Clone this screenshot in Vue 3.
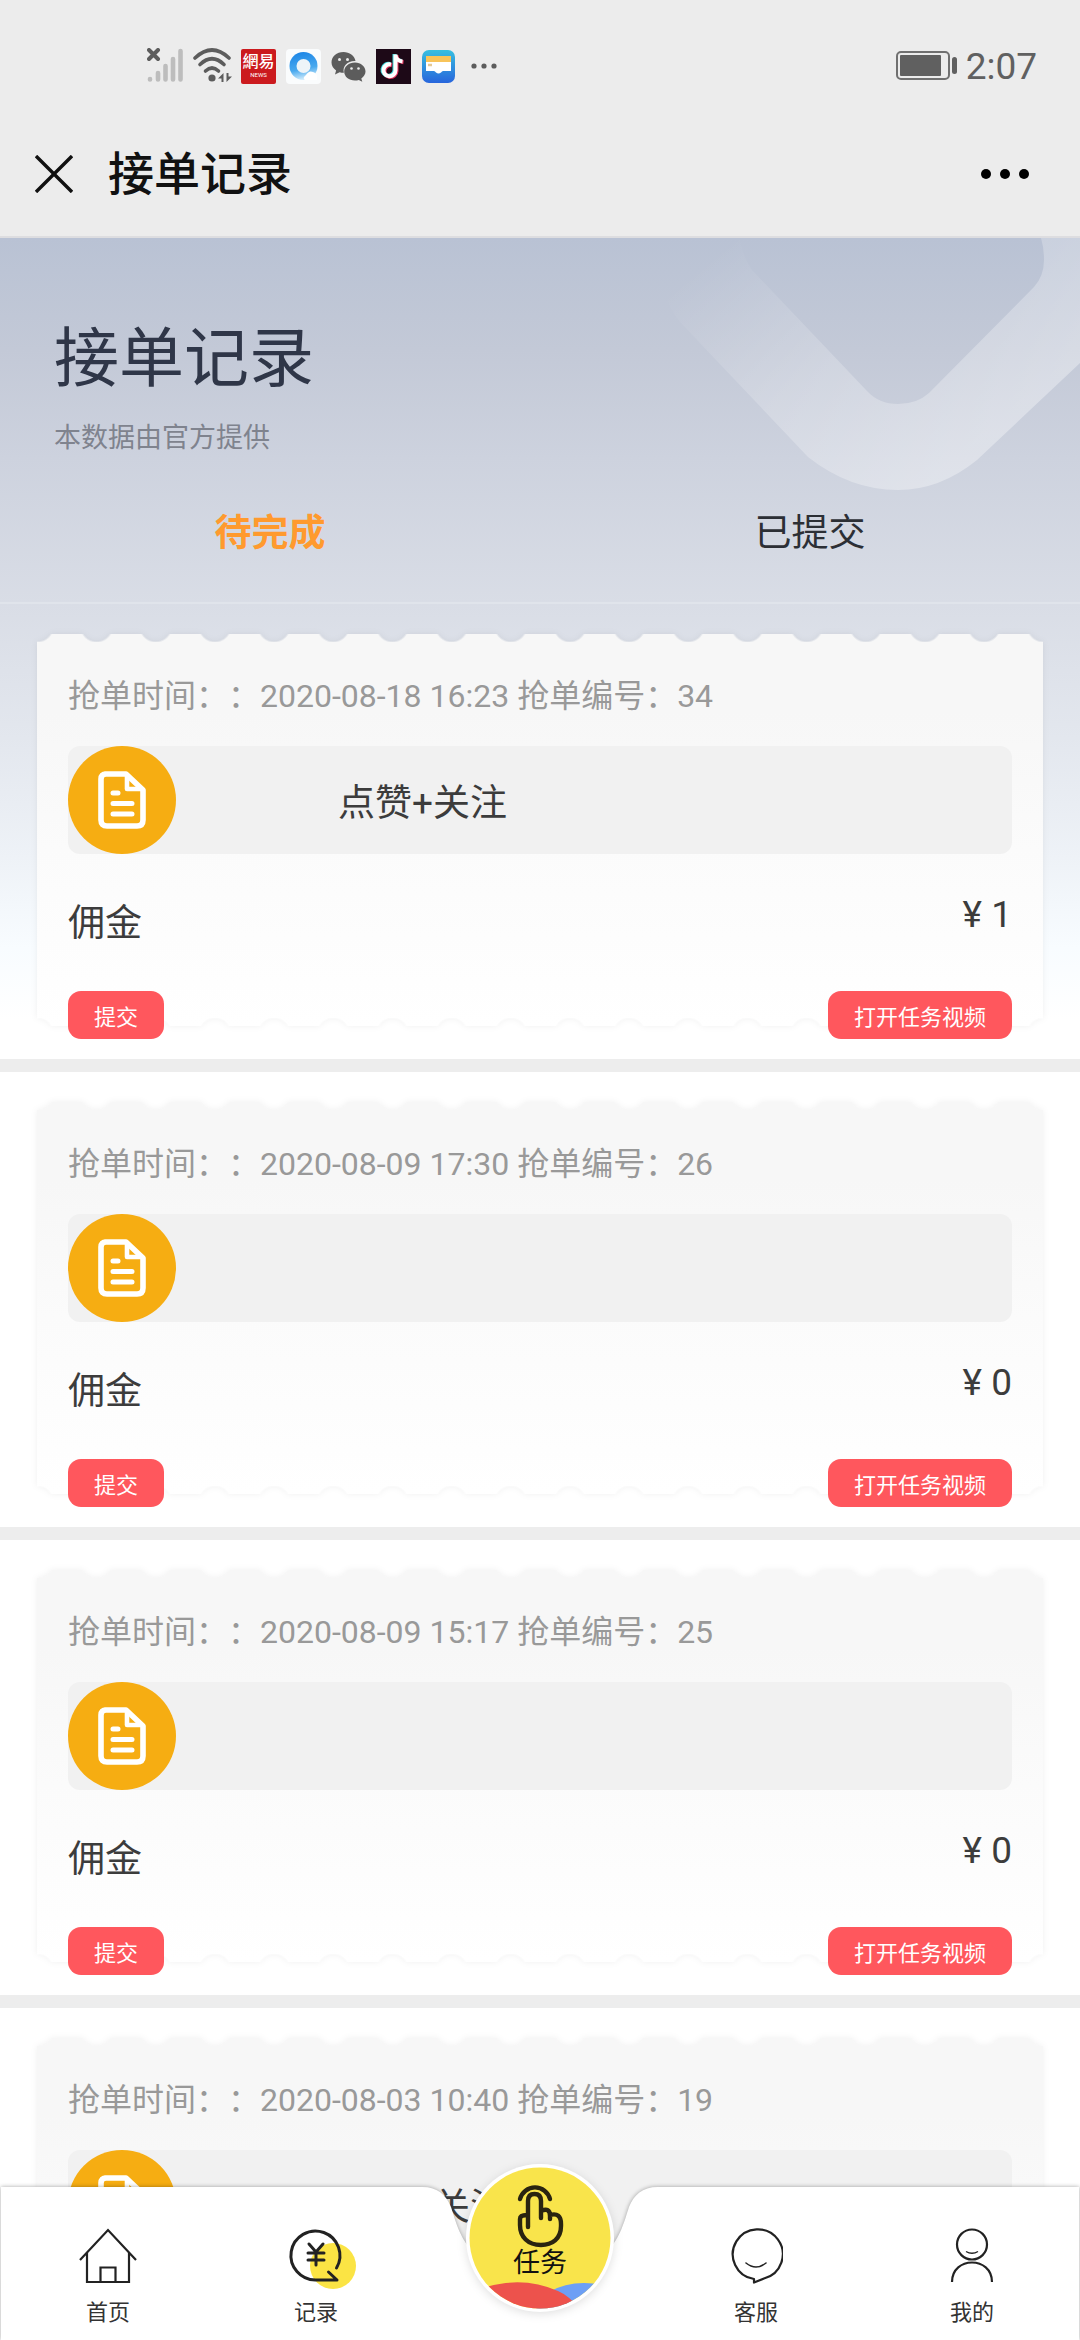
<script setup>
import { ref } from 'vue'

const activeTab = ref('pending')
const tabs = [
  { key: 'pending', label: '待完成' },
  { key: 'submitted', label: '已提交' },
]

const orders = [
  { id: 34, time: '2020-08-18 16:23', title: '点赞+关注', reward: 1 },
  { id: 26, time: '2020-08-09 17:30', title: '', reward: 0 },
  { id: 25, time: '2020-08-09 15:17', title: '', reward: 0 },
  { id: 19, time: '2020-08-03 10:40', title: '点赞+关注', reward: 0 },
]
</script>

<template>
  <div class="app">
    <header class="top">
      <div class="status">
        <div class="status-icons">
          <svg width="36" height="36" viewBox="0 0 36 36">
            <path d="M2 2 L11 11 M11 2 L2 11" stroke="#5c5c5c" stroke-width="4" stroke-linecap="round" />
            <g stroke="#bdbdbd" stroke-width="4.6" stroke-linecap="round">
              <path d="M3 31V31.5M11 25V31.5M18.500 18V31.500M26 11V31.500M33.500 3V31.500" />
            </g>
          </svg>
          <svg class="wifi" width="40" height="36" viewBox="0 0 40 36" fill="none">
            <g stroke="#5c5c5c" stroke-width="3.600" stroke-linecap="round">
              <path d="M2 10Q19 -6 36 10" />
              <path d="M7 16.500Q19 5 31 16.500" />
              <path d="M12.500 23Q19 17 25.500 23" />
            </g>
            <circle cx="19" cy="30" r="3.600" fill="#5c5c5c" />
            <path d="M25 30.500L30.500 25V34H28.500V30.500ZM39 28.500L33.500 34V25H35.500V28.500Z" fill="#5c5c5c" />
          </svg>
          <span class="news"><b>網易</b><i>NEWS</i></span>
          <svg width="35" height="36" viewBox="0 0 35 36">
            <defs>
              <linearGradient id="browser" x1="0.400" y1="0" x2="0.600" y2="1">
                <stop offset="0" stop-color="#1c86e6" />
                <stop offset="0.600" stop-color="#49a9ee" />
                <stop offset="1" stop-color="#dff3fd" />
              </linearGradient>
            </defs>
            <rect width="35" height="35" y="1" rx="4" fill="#fafcfd" />
            <circle cx="17.500" cy="18" r="14" fill="url(#browser)" />
            <circle cx="17.500" cy="18" r="7" fill="#eef4f8" />
            <path d="M20 27Q23 22 27 24Q32 25 31 32H19Q16 30 20 27Z" fill="#fff" />
          </svg>
          <svg width="35" height="36" viewBox="0 0 35 36" fill="#5c5c5c">
            <path d="M12.500 4C5.600 4 0.500 8.500 0.500 14.300c0 3.500 1.800 6.200 4.600 8.200L4 26.500l4.600-2.300c1.500.4 2.600.6 4.300.6C11 18 17 12.500 24.500 13 23.500 7.500 18.500 4 12.500 4Z" />
            <path d="M24 14.500c-6.300 0-10.800 4-10.800 9 0 5.200 4.700 9 10.800 9 1.300 0 2.600-.3 3.800-.6l3.500 1.900-1-3.300c2.500-1.800 4.200-4.200 4.200-7 0-5-4.700-9-10.500-9Z" />
            <g fill="#ececec"><circle cx="8.500" cy="11.500" r="1.500" /><circle cx="16.500" cy="11.500" r="1.500" /><circle cx="20.500" cy="20.500" r="1.300" /><circle cx="27.500" cy="20.500" r="1.300" /></g>
          </svg>
          <svg width="35" height="36" viewBox="0 0 35 36" fill="none">
            <rect y="1" width="35" height="35" fill="#1d0917" />
            <g stroke-width="4">
              <path d="M15 16.500a6 6 0 1 0 4.500 6V6.500c0 4 3 6.500 7 7" stroke="#42d9dc" transform="translate(-1 -0.500)" />
              <path d="M15 16.500a6 6 0 1 0 4.500 6V6.500c0 4 3 6.500 7 7" stroke="#e5355f" transform="translate(1 0.700)" />
              <path d="M15 16.500a6 6 0 1 0 4.500 6V6.500c0 4 3 6.500 7 7" stroke="#fff" />
            </g>
          </svg>
          <svg width="35" height="36" viewBox="0 0 35 36">
            <defs>
              <linearGradient id="wallet" x1="0" y1="0" x2="0" y2="1">
                <stop offset="0" stop-color="#37bfe0" /><stop offset="1" stop-color="#2765dc" />
              </linearGradient>
            </defs>
            <rect x="1" y="2" width="33" height="33" rx="7" fill="url(#wallet)" />
            <path d="M5 8h25v8H5z" fill="#f8c45a" />
            <path d="M5 14h25v9h-8q-1 0-2 1.500-2.500 2-5 0Q14 23 13 23H5z" fill="#fff" />
            <path d="M7 17h4" stroke="#e5c896" stroke-width="2.500" />
          </svg>
          <svg width="35" height="36" viewBox="0 0 35 36" fill="#5c5c5c">
            <circle cx="8" cy="18" r="2.600" /><circle cx="18" cy="18" r="2.600" /><circle cx="28" cy="18" r="2.600" />
          </svg>
        </div>
        <div class="status-right">
          <svg width="62" height="30" viewBox="0 0 62 30">
            <rect x="1" y="1" width="52" height="27" rx="4" fill="none" stroke="#707070" stroke-width="2" />
            <rect x="4" y="4" width="41" height="21" rx="1" fill="#606060" />
            <rect x="56" y="6" width="5" height="17" rx="2.500" fill="#606060" />
          </svg>
          <time>2:07</time>
        </div>
      </div>
      <div class="titlebar">
        <button class="icon-btn" aria-label="关闭">
          <svg width="38" height="38" viewBox="0 0 38 38"><path d="M1 1L37 37M37 1L1 37" stroke="#111" stroke-width="3.400" /></svg>
        </button>
        <span class="bar-title">接单记录</span>
        <button class="icon-btn" aria-label="更多">
          <svg width="50" height="12" viewBox="0 0 50 12"><circle cx="6" cy="6" r="5" /><circle cx="25" cy="6" r="5" /><circle cx="44" cy="6" r="5" /></svg>
        </button>
      </div>
    </header>

    <main class="content">
      <section class="hero">
        <svg class="hero-mark" width="420" height="252" viewBox="0 0 420 252">
          <defs>
            <linearGradient id="mark" gradientUnits="userSpaceOnUse" x1="60" y1="10" x2="260" y2="250">
              <stop offset="0" stop-color="#fff" stop-opacity="0" />
              <stop offset="0.500" stop-color="#fff" stop-opacity="0.200" />
              <stop offset="1" stop-color="#fff" stop-opacity="0.340" />
            </linearGradient>
          </defs>
          <path d="M80 0Q82 18 92 32L207 153Q219 166 238 166Q257 166 269 155L374 49Q384 38 384 22Q384 10 381 0H420V125L317 222Q280 252 238 252Q190 252 148 219L20 84Q0 60 0 20V0Z" fill="url(#mark)" />
        </svg>
        <h1>接单记录</h1>
        <p>本数据由官方提供</p>
        <nav class="tabs">
          <button
            v-for="tab in tabs"
            :key="tab.key"
            :class="{ active: tab.key === activeTab }"
            @click="activeTab = tab.key"
          >{{ tab.label }}</button>
        </nav>
      </section>

      <ul class="orders">
        <li v-for="order in orders" :key="order.id" class="order">
          <article class="ticket">
            <div class="ticket-shadow"><div class="ticket-paper"></div></div>
            <div class="meta">抢单时间：：{{ order.time }} 抢单编号：{{ order.id }}</div>
            <div class="task">
              <span class="task-icon">
                <svg width="48" height="58" viewBox="0 0 48 58" fill="none" stroke="#fff" stroke-linejoin="round" stroke-linecap="round">
                  <path d="M7 3H28L45 19V49Q45 55 39 55H9Q3 55 3 49V8Q3 3 8 3Z" stroke-width="5.600" />
                  <path d="M29 4V18H44" stroke-width="4.600" />
                  <path d="M15 22H20M15 32.500H34M15 43H34" stroke-width="5" />
                </svg>
              </span>
              <span class="task-title">{{ order.title }}</span>
            </div>
            <div class="reward">
              <span class="reward-label">佣金</span>
              <span class="reward-value">¥ {{ order.reward }}</span>
            </div>
            <div class="actions">
              <button>提交</button>
              <button>打开任务视频</button>
            </div>
          </article>
        </li>
      </ul>
    </main>

    <nav class="tabbar">
      <div class="tabbar-bg">
        <div class="side"></div>
        <svg width="260" height="153" viewBox="0 0 260 153"><path d="M0 0H12C28 0 36 8 41 20C50 48 58 86 130 86C202 86 210 48 219 20C224 8 232 0 248 0H260V153H0Z" fill="#fff" /></svg>
        <div class="side"></div>
      </div>
      <a href="#home">
        <svg width="58" height="56" viewBox="0 0 58 56" fill="none" stroke="#222" stroke-width="2.200">
          <path d="M1 32L29 2L57 32M8 25V54H50V25M21.500 54V39.500H36.500V54" />
        </svg>
        <span>首页</span>
      </a>
      <a href="#records" class="records">
        <svg width="52" height="56" viewBox="0 0 52 56" fill="none" stroke="#222" stroke-width="3">
          <circle cx="43" cy="38" r="23" fill="#fbe444" stroke="none" />
          <path d="M46.500 40A24.500 24.500 0 1 0 26 52H47L38.500 44" stroke-linecap="round" stroke-linejoin="round" />
          <path d="M19 16L26 24L33 16M26 24V37M18 25H34M18 32H34" stroke-linecap="round" />
        </svg>
        <span>记录</span>
      </a>
      <a href="#tasks" class="center">
        <svg class="disc" width="148" height="148" viewBox="0 0 148 148">
          <defs><clipPath id="disc"><circle cx="74" cy="74" r="70.500" /></clipPath></defs>
          <circle cx="74" cy="74" r="74" fill="#fff" />
          <g clip-path="url(#disc)">
            <rect width="148" height="148" fill="#f9e44b" />
            <ellipse cx="118" cy="148" rx="48" ry="29" fill="#6d9ff5" />
            <path d="M0 130Q50 108 92 127Q104 132 116 148H0Z" fill="#ed524c" />
          </g>
          <g fill="none" stroke="#2a2410" stroke-width="4.400" stroke-linecap="round" stroke-linejoin="round">
            <path d="M54 35A15.500 15.500 0 0 1 84 35" />
            <path d="M62 63V37Q62 30 68.500 30Q75 30 75 37V54M75 47Q84 43 84 52V55M84 51Q95 48 95 60V62C95 75 86 81 75 81C62 81 54 73 54 61V55Q54 51 61 51" />
          </g>
        </svg>
        <span>任务</span>
      </a>
      <a href="#service">
        <svg width="54" height="56" viewBox="0 0 54 56" fill="none" stroke="#222" stroke-width="2.200" stroke-linejoin="round">
          <path d="M25 51A25 25 0 1 1 35 50.500L25 54.500Z" />
          <path d="M17 35Q27 43 37 35" stroke-width="1.600" stroke-linecap="round" />
        </svg>
        <span>客服</span>
      </a>
      <a href="#me">
        <svg width="44" height="56" viewBox="0 0 44 56" fill="none" stroke="#222" stroke-width="2.200">
          <circle cx="22" cy="16.500" r="15" />
          <path d="M2 54C2 28 42 28 42 54" />
          <path d="M16 23.500Q22 27 28 23.500" stroke-width="1.400" />
        </svg>
        <span>我的</span>
      </a>
    </nav>
  </div>
</template>

<style>
body {
  background: #fff;
}
</style>

<style scoped>
.app {
  position: relative;
  display: flex;
  flex-direction: column;
  height: 100vh;
  overflow: hidden;
  font-family: Roboto, "Noto Sans CJK SC", sans-serif;
  text-spacing-trim: space-all;
  color: #3c3c3c;
}

.app * {
  box-sizing: border-box;
}

button {
  border: 0;
  padding: 0;
  background: none;
  font: inherit;
  color: inherit;
  cursor: pointer;
}

svg {
  display: block;
  flex: none;
}

/* system and title bars */
.top {
  flex: none;
  background: #ececec;
  border-bottom: 2px solid #dddde0;
}

.status {
  display: flex;
  justify-content: space-between;
  align-items: center;
  height: 132px;
  padding: 0 43px 0 147px;
}

.status-icons {
  display: flex;
  align-items: center;
  gap: 10px;
}

.wifi {
  margin-right: -2px;
}

.news {
  display: flex;
  flex-direction: column;
  align-items: center;
  justify-content: center;
  width: 35px;
  height: 35px;
  border-radius: 2px;
  background: #cb1a1e;
  color: #fff;
}

.news b {
  font-size: 16px;
  line-height: 18px;
  font-weight: 500;
}

.news i {
  font-size: 6px;
  line-height: 8px;
  font-style: normal;
}

.status-right {
  display: flex;
  align-items: center;
  gap: 8px;
  font-size: 37px;
  color: #606060;
}

.titlebar {
  display: flex;
  align-items: center;
  height: 104px;
  padding: 0 50px 20px 35px;
}

.icon-btn {
  color: #000;
}

.bar-title {
  flex: 1;
  margin-left: 35px;
  font-size: 46px;
  font-weight: 500;
  line-height: 60px;
  color: #111;
}

/* scrolling page, running on behind the notch of the bottom bar */
.content {
  flex: 1;
  min-height: 0;
  margin-bottom: 66px;
  overflow-y: auto;
  scrollbar-width: none;
}

.content::before {
  content: "";
  display: block;
  height: 782px;
  margin-bottom: -782px;
  background: linear-gradient(#b9c2d4, #c3c9d7 112px, #cdd2de 220px, #d9dde6 366px, #e3e7ee 500px, #eef2f7 620px, #f8fcff 710px, #fff 782px);
}

.hero {
  position: relative;
  padding-top: 74px;
  border-bottom: 2px solid #e0e4eb;
}

.hero-mark {
  position: absolute;
  top: 0;
  right: 0;
}

h1 {
  margin: 0;
  padding-left: 54px;
  font-size: 65px;
  line-height: 94px;
  font-weight: 400;
  color: #2f3648;
}

p {
  margin: 0;
  padding: 12px 0 0 54px;
  font-size: 27px;
  line-height: 40px;
  color: #7f838e;
}

.tabs {
  position: relative;
  display: flex;
  height: 144px;
}

.tabs button {
  flex: 1;
  font-size: 37px;
  color: #2c2f35;
}

.tabs .active {
  font-weight: 700;
  color: #ff9a2e;
}

.orders {
  margin: 0;
  padding: 0 0 87px;
  list-style: none;
}

.order {
  padding: 30px 37px 20px;
  border-bottom: 13px solid #ededed;
}

.ticket {
  position: relative;
  padding: 38px 31px 0;
}

.ticket-shadow {
  position: absolute;
  inset: 0 0 13px;
  filter: drop-shadow(0 0 3px rgba(0, 0, 0, 0.06));
}

.ticket-paper {
  height: 100%;
  background: linear-gradient(#f7f7f7 20%, #fbfbfb 55%, #fff);
  mask-image:
    radial-gradient(circle at 50% -8px, transparent 15px, #000 17px),
    linear-gradient(#000, #000),
    radial-gradient(circle at 50% 16px, transparent 15px, #000 17px);
  mask-size: 59px 8px, 100% calc(100% - 16px), 59px 8px;
  mask-position: 30px 0, 0 8px, 30px 100%;
  mask-repeat: round no-repeat, no-repeat, round no-repeat;
}

.meta {
  position: relative;
  font-size: 32px;
  line-height: 48px;
  color: #999;
}

.task {
  position: relative;
  display: flex;
  align-items: center;
  height: 108px;
  margin-top: 26px;
  border-radius: 12px;
  background: #f1f1f1;
}

.task-icon {
  display: flex;
  align-items: center;
  justify-content: center;
  width: 108px;
  height: 108px;
  border-radius: 50%;
  background: #f6ad12;
}

.task-title {
  margin-left: 162px;
  font-size: 37px;
}

.reward {
  position: relative;
  display: flex;
  justify-content: space-between;
  height: 137px;
  padding-top: 32px;
  font-size: 37px;
}

.reward-label {
  line-height: 76px;
}

.reward-value {
  line-height: 58px;
}

.actions {
  position: relative;
  display: flex;
  justify-content: space-between;
}

.actions button {
  height: 48px;
  padding: 0 26px;
  border-radius: 13px;
  background: #ff575d;
  font-size: 22px;
  color: #fff;
}

/* bottom navigation */
.tabbar {
  position: absolute;
  left: 0;
  right: 0;
  bottom: 0;
  display: flex;
  height: 153px;
}

.tabbar-bg {
  position: absolute;
  inset: 0 1px;
  display: flex;
  filter: drop-shadow(0 0 2px rgba(0, 0, 0, 0.35));
}

.side {
  flex: 1;
  background: #fff;
}

.tabbar a {
  position: relative;
  flex: none;
  width: 20%;
  display: flex;
  flex-direction: column;
  align-items: center;
  gap: 14px;
  padding-top: 41px;
  font-size: 22px;
  line-height: 30px;
  color: #333;
  text-decoration: none;
}

.tabbar .records {
  padding-right: 16px;
}

.records svg {
  overflow: visible;
}

.tabbar .center {
  padding-top: 56px;
  font-size: 27px;
  line-height: 40px;
  color: #111;
}

.disc {
  position: absolute;
  top: -23px;
  filter: drop-shadow(0 2px 5px rgba(0, 0, 0, 0.12));
}

.center span {
  position: relative;
}
</style>
